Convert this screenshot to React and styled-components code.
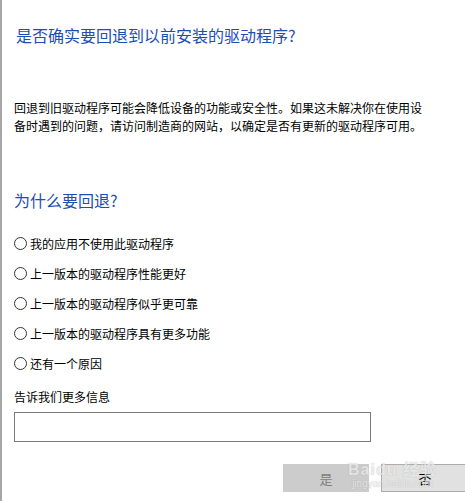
import React from "react";
import styled, { createGlobalStyle } from "styled-components";

const GlobalStyle = createGlobalStyle`
  html, body { margin: 0; padding: 0; background: #ffffff; }
  body {
    font-family: "Noto Sans CJK SC", "Noto Sans", "Liberation Sans", sans-serif;
    color: #000;
  }
  * { box-sizing: border-box; }
`;

const Dialog = styled.div`
  position: relative;
  width: 465px;
  height: 501px;
  overflow: hidden;
  background: #ffffff;
  border-left: 2px solid #a6a6a6;
  padding: 24px 0 0 12px;
  display: flex;
  flex-direction: column;
`;

const Title = styled.h1`
  margin: 0 0 0 2px;
  font-size: 16px;
  line-height: 22px;
  font-weight: 400;
  color: #1e4db3;
`;

const Intro = styled.p`
  margin: 53px 0 0 0;
  width: 410px;
  font-size: 12px;
  line-height: 18px;
  color: #000;
`;

const SectionTitle = styled.h2`
  margin: 54px 0 0 0;
  font-size: 16px;
  line-height: 22px;
  font-weight: 400;
  color: #1e4db3;
`;

const Options = styled.div`
  margin-top: 17px;
  display: flex;
  flex-direction: column;
`;

const Option = styled.label`
  height: 30px;
  display: flex;
  align-items: center;
  font-size: 12px;
  color: #000;
`;

const Radio = styled.span`
  width: 13px;
  height: 13px;
  border: 1px solid #333;
  border-radius: 50%;
  margin-right: 3px;
  flex: none;
`;

const FieldLabel = styled.div`
  margin-top: 10px;
  font-size: 12px;
  line-height: 18px;
`;

const TextBox = styled.div`
  margin-top: 6px;
  width: 357px;
  height: 30px;
  border: 1px solid #7a7a7a;
  background: #fff;
`;

const ButtonRow = styled.div`
  margin-top: 22px;
  margin-right: -4px;
  display: flex;
  justify-content: flex-end;
  gap: 12px;
`;

const Button = styled.div`
  width: ${(p) => (p.$primary ? "86px" : "88px")};
  height: 28px;
  display: flex;
  align-items: center;
  justify-content: center;
  font-size: 13px;
  background: ${(p) => (p.$disabled ? "#cccccc" : "#e1e1e1")};
  color: ${(p) => (p.$disabled ? "#7d7d7d" : "#000")};
  border: 1px solid ${(p) => (p.$disabled ? "#cccccc" : "#adadad")};
`;

const Watermark = styled.div`
  position: absolute;
  left: 346px;
  top: 461px;
  display: flex;
  flex-direction: column;
  align-items: center;
  pointer-events: none;
  color: rgba(255, 255, 255, 0.7);
  text-shadow: 0 0 1px rgba(130, 130, 130, 0.55);
  font-family: "Liberation Sans", "Noto Sans CJK SC", sans-serif;
`;

const WatermarkBrand = styled.div`
  font-size: 16px;
  font-weight: 700;
  line-height: 17px;
  letter-spacing: 1px;
`;

const WatermarkUrl = styled.div`
  font-size: 10px;
  line-height: 12px;
`;

const options = [
  "我的应用不使用此驱动程序",
  "上一版本的驱动程序性能更好",
  "上一版本的驱动程序似乎更可靠",
  "上一版本的驱动程序具有更多功能",
  "还有一个原因",
];

export default function App() {
  return (
    <>
      <GlobalStyle />
      <Dialog>
        <Title>是否确实要回退到以前安装的驱动程序?</Title>
        <Intro>
          回退到旧驱动程序可能会降低设备的功能或安全性。如果这未解决你在使用设备时遇到的问题，请访问制造商的网站，以确定是否有更新的驱动程序可用。
        </Intro>
        <SectionTitle>为什么要回退?</SectionTitle>
        <Options>
          {options.map((o) => (
            <Option key={o}>
              <Radio />
              {o}
            </Option>
          ))}
        </Options>
        <FieldLabel>告诉我们更多信息</FieldLabel>
        <TextBox />
        <ButtonRow>
          <Button $primary $disabled>是</Button>
          <Button>否</Button>
        </ButtonRow>
        <Watermark>
          <WatermarkBrand>Baidu 经验</WatermarkBrand>
          <WatermarkUrl>jingyan.baidu.com</WatermarkUrl>
        </Watermark>
      </Dialog>
    </>
  );
}
